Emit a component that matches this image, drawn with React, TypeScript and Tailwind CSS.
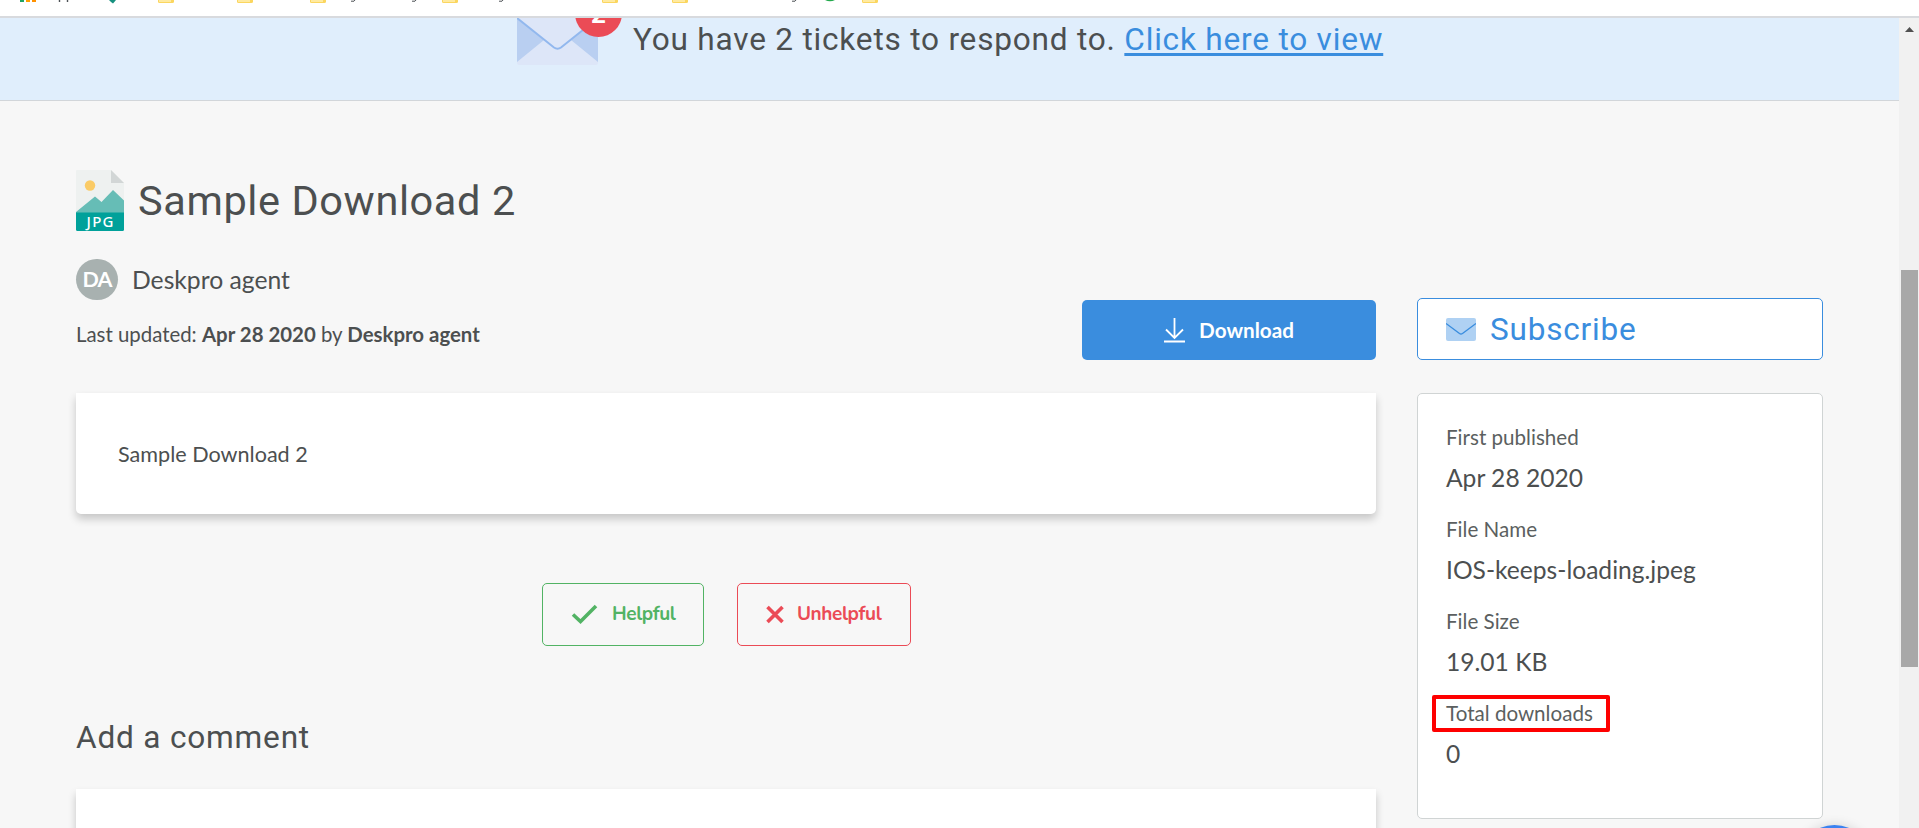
import type { ReactNode } from 'react';

const folders = [158, 237, 310, 442, 602, 672, 862];
const descenders = [353, 414, 501, 794];

function BookmarksBar() {
  return (
    <div className="relative h-[18px] shrink-0 overflow-hidden border-b-2 border-[#d8dade] bg-white">
      <svg className="block" width="1000" height="16" viewBox="0 0 1000 16">
        <rect x="20" y="0" width="4" height="2" fill="#1fa463" />
        <rect x="26" y="0" width="4" height="2" fill="#ffa000" />
        <rect x="32" y="0" width="4" height="2" fill="#ff9100" />
        <path d="M59.500 0v2M67.500 0v2" stroke="#4d5256" strokeWidth="1.400" />
        <path d="M109 0h7l-3 3.500l-2-1.500z" fill="#16907f" />
        {folders.map((x) => (
          <g key={x}>
            <path d={`M${x} 0h16v1.500a1.500 1.500 0 0 1-1.500 1.500h-13a1.500 1.500 0 0 1-1.500-1.500z`} fill="#fbd65f" />
            <path d={`M${x + 1} 0h12v2h-12z`} fill="#ffeaa0" />
          </g>
        ))}
        {descenders.map((x) => (
          <path key={x} d={`M${x - 2} 1.200h3l1-1.200`} fill="none" stroke="#4d5256" />
        ))}
        <path d="M825 0h10q-5 2.500-10 0z" fill="#23a94d" />
      </svg>
    </div>
  );
}

function Banner() {
  return (
    <div className="flex h-[83px] shrink-0 border-b border-[#d2d6da] bg-[#e0eefc] pl-[517px]">
      <div className="relative h-[47px] w-[81px]">
        <svg className="block" width="81" height="47" viewBox="0 0 81 47">
          <path d="M0 0h81v45a2 2 0 0 1-2 2H2a2 2 0 0 1-2-2z" fill="#dde6f8" />
          <path d="M0 0L27 22L0 44zM81 0L54 22L81 44z" fill="#b9cff1" />
          <path d="M0 0L37 29.500Q40.500 32 44 29.500L81 0" fill="none" stroke="#92b8ee" strokeWidth="2" />
        </svg>
        <div className="absolute left-[58px] top-0 h-[20px] w-[48px] overflow-hidden">
          <div className="absolute -top-[28px] left-0 flex size-[47px] items-center justify-center rounded-full bg-[#eb4b56] font-['Roboto',sans-serif] text-[26px] font-bold leading-none text-white">
            2
          </div>
        </div>
      </div>
      <p className="ml-[35px] mt-[2px] whitespace-nowrap font-['Roboto',sans-serif] text-[31.6px] leading-[40px] tracking-[0.78px] text-[#4c4f50]">
        You have 2 tickets to respond to.{' '}
        <a className="text-[#3a8dde] underline decoration-[3px] underline-offset-[3px] [text-decoration-skip-ink:none]">Click here to view</a>
      </p>
    </div>
  );
}

function JpgIcon() {
  return (
    <svg width="48" height="61" viewBox="0 0 48 61">
      <path d="M1 0H35L48 13V60H0V1a1 1 0 0 1 1-1z" fill="#eef1f0" />
      <path d="M35 0L48 13H35z" fill="#d2d6d6" />
      <circle cx="14" cy="15.500" r="5.200" fill="#facb66" />
      <path d="M0 42L19 26.500L25.500 32L37 20L48 30.500V44H0z" fill="#66bdb6" />
      <path d="M0 42.500H48V59.500a1.500 1.500 0 0 1-1.500 1.500H1.500A1.500 1.500 0 0 1 0 59.500z" fill="#00a19a" />
      <text x="24" y="57.300" textAnchor="middle" fontFamily="Noto Sans" fontWeight="500" fontSize="15" fill="#fff" textLength="27">
        JPG
      </text>
    </svg>
  );
}

function Detail({ label, value, marked }: { label: string; value: string; marked?: boolean }) {
  return (
    <div className="h-[92px]">
      <dt className="relative text-[20.6px] leading-[30px] text-[#5b5f60]">
        {label}
        {marked && <span className="absolute -left-[14px] -top-[3px] h-[37px] w-[178px] rounded-[2px] border-4 border-[#fe0000]" />}
      </dt>
      <dd className="mt-[8px] text-[24.6px] leading-[36px] text-[#4c4f50]">{value}</dd>
    </div>
  );
}

function VoteButton({ className, children }: { className: string; children: ReactNode }) {
  return (
    <button className={`flex h-[63px] items-center rounded-[5px] border font-['Nunito','Lato',sans-serif] text-[19px] font-bold tracking-[-0.4px] ${className}`}>
      {children}
    </button>
  );
}

function Main() {
  return (
    <main className="w-[1300px]">
      <div className="flex h-[61px] items-center">
        <JpgIcon />
        <h1 className="ml-[14px] mt-px whitespace-nowrap font-['Roboto',sans-serif] text-[41.5px] leading-[50px] tracking-[0.6px] text-[#4c4f50]">Sample Download 2</h1>
      </div>
      <div className="mt-[28px] flex h-[41px] items-center">
        <span className="flex h-[41px] w-[42px] items-center justify-center rounded-full bg-[#a8b1b0] text-[21.5px] font-bold tracking-[-1px] text-white">DA</span>
        <span className="ml-[14px] text-[24.7px]">Deskpro agent</span>
      </div>
      <div className="flex h-[60px] justify-between">
        <p className="mt-[18px] text-[20.4px] leading-[32px]">
          Last updated: <b>Apr 28 2020</b> by <b>Deskpro agent</b>
        </p>
        <button className="flex h-[60px] w-[294px] items-center justify-center rounded-[5px] bg-[#3a8dde] text-[20.7px] font-bold text-white">
          <svg className="mr-[14px] mt-px" width="21" height="25" viewBox="0 0 21 25" fill="none" stroke="#fff" strokeWidth="1.800">
            <path d="M10.500 0V20M2 11.500L10.500 20L19 11.500M0 23.500H21" />
          </svg>
          <span className="pt-px">Download</span>
        </button>
      </div>
      <div className="mt-[33px] h-[121px] rounded-b-[5px] bg-white pl-[42px] pt-[45px] text-[21.6px] leading-[32px] shadow-[0_5px_8px_rgba(0,0,0,0.2)]">Sample Download 2</div>
      <div className="mt-[69px] flex justify-center gap-[33px] pl-px">
        <VoteButton className="w-[162px] border-[#52b364] pl-[28px] text-[#52b364]">
          <svg className="mr-[14px]" width="27" height="21" viewBox="0 0 27 21" fill="none" stroke="currentColor" strokeWidth="3.600">
            <path d="M2 10.500L9.500 17.500L25 2" />
          </svg>
          Helpful
        </VoteButton>
        <VoteButton className="w-[174px] border-[#eb4b56] pl-[28px] text-[#eb4b56]">
          <svg className="mr-[13px]" width="18" height="19" viewBox="0 0 18 19" fill="none" stroke="currentColor" strokeWidth="3.600">
            <path d="M1.500 2L16.500 17M16.500 2L1.500 17" />
          </svg>
          Unhelpful
        </VoteButton>
      </div>
      <h2 className="mt-[71px] font-['Roboto',sans-serif] text-[31.6px] leading-[42px] tracking-[0.8px]">Add a comment</h2>
      <div className="mt-[30px] h-[100px] bg-white shadow-[0_5px_8px_rgba(0,0,0,0.2)]" />
    </main>
  );
}

function Sidebar() {
  return (
    <aside className="mt-[128px] w-[406px]">
      <button className="flex h-[62px] w-full items-center rounded-[5px] border border-[#3a8dde] bg-white pl-[28px] font-['Roboto',sans-serif] text-[31.5px] tracking-[0.8px] text-[#3a8dde]">
        <svg className="mr-[14px]" width="30" height="23" viewBox="0 0 30 23">
          <rect width="30" height="23" rx="2" fill="#afd1f3" />
          <path d="M0 5.500L13.500 15.500Q15 16.500 16.500 15.500L30 5.500" fill="none" stroke="#3a8dde" strokeWidth="1.400" />
        </svg>
        <span className="pt-px">Subscribe</span>
      </button>
      <dl className="mt-[33px] h-[426px] rounded-[5px] border border-[#d0d4d4] bg-white pl-[28px] pt-[28px]">
        <Detail label="First published" value="Apr 28 2020" />
        <Detail label="File Name" value="IOS-keeps-loading.jpeg" />
        <Detail label="File Size" value="19.01 KB" />
        <Detail label="Total downloads" value="0" marked />
      </dl>
    </aside>
  );
}

export default function App() {
  return (
    <div className="flex h-[828px] flex-col overflow-hidden bg-[#f7f7f7] font-['Lato',sans-serif] text-[#4c4f50]">
      <BookmarksBar />
      <div className="flex min-h-0 flex-1">
        <div className="relative flex flex-1 flex-col overflow-hidden">
          <Banner />
          <div className="flex gap-[41px] pl-[76px] pt-[69px]">
            <Main />
            <Sidebar />
          </div>
          <div className="absolute left-[1798px] top-[807px] size-[73px] rounded-full bg-[#3b82f0] shadow-[0_0_12px_rgba(0,0,0,0.15)]" />
        </div>
        <div className="w-[20px] bg-[#f1f1f1] pl-[2px] pr-px">
          <svg className="block" width="17" height="252" viewBox="0 0 17 252">
            <path d="M4 14h9L8.500 9z" fill="#505050" />
          </svg>
          <div className="h-[397px] bg-[#a8a8a8]" />
        </div>
      </div>
    </div>
  );
}
